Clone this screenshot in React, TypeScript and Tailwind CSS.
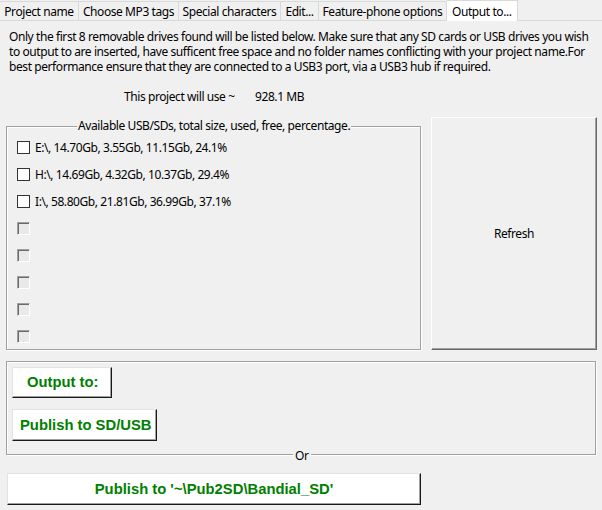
import React from "react";

const tabs = [
  { label: "Project name", w: "w-[79px]" },
  { label: "Choose MP3 tags", w: "w-[100px]" },
  { label: "Special characters", w: "w-[102px]" },
  { label: "Edit...", w: "w-[38px]" },
  { label: "Feature-phone options", w: "w-[128px]" },
];

const drives = [
  "E:\\, 14.70Gb, 3.55Gb, 11.15Gb, 24.1%",
  "H:\\, 14.69Gb, 4.32Gb, 10.37Gb, 29.4%",
  "I:\\, 58.80Gb, 21.81Gb, 36.99Gb, 37.1%",
];

function GreenButton({ children, className }: { children: React.ReactNode; className: string }) {
  return (
    <div
      className={
        "flex items-center whitespace-nowrap bg-white border border-t-[#e3e3e3] border-l-[#e3e3e3] border-r-[#1a1a1a] border-b-[#1a1a1a] shadow-[inset_-1px_-1px_0_#a0a0a0] font-['Liberation_Sans',Arial,sans-serif] font-bold text-[14.8px] tracking-normal text-[#008000] " +
        className
      }
    >
      {children}
    </div>
  );
}

export default function App() {
  return (
    <div className="w-[602px] h-[510px] bg-[#f0f0f0] overflow-hidden text-[12px] tracking-[-0.42px] text-black font-['Noto_Sans',sans-serif]">
      {/* Tabs */}
      <div className="flex h-[21px] items-end border-b border-[#d9d9d9]">
        {tabs.map((t) => (
          <div
            key={t.label}
            className={
              t.w +
              " h-[19px] border-t border-r border-[#d9d9d9] bg-[#f0f0f0] flex items-center justify-center whitespace-nowrap leading-[15px]"
            }
          >
            {t.label}
          </div>
        ))}
        <div className="w-[71px] h-[21px] -mb-px bg-white border-t border-r border-[#d9d9d9] flex items-center pl-[5px] whitespace-nowrap leading-[15px]">
          Output to...
        </div>
      </div>

      {/* Description */}
      <div className="pl-[9px] pt-[8px] leading-[15px] whitespace-nowrap">
        <div>Only the first 8 removable drives found will be listed below. Make sure that any SD cards or USB drives you wish</div>
        <div>to output to are inserted, have sufficent free space and no folder names conflicting with your project name.For</div>
        <div>best performance ensure that they are connected to a USB3 port, via a USB3 hub if required.</div>
      </div>

      <div className="mt-[15px] flex h-[15px] leading-[15px] whitespace-nowrap">
        <span className="pl-[124px] w-[255px]">This project will use ~</span>
        <span>928.1 MB</span>
      </div>

      {/* Drives + Refresh */}
      <div className="mt-[13px] flex h-[233px] pl-[6px]">
        <div className="relative mt-[9px] w-[415px] h-[224px] border border-[#a0a0a0] shadow-[inset_1px_1px_0_#fff,1px_1px_0_#fff]">
          <span className="absolute left-[70px] top-[-9px] px-[1px] bg-[#f0f0f0] leading-[15px] whitespace-nowrap">
            Available USB/SDs, total size, used, free, percentage.
          </span>
          <div className="flex flex-col pt-[7px] pl-[10px]">
            {Array.from({ length: 8 }).map((_, i) => (
              <div key={i} className="flex items-center h-[27px]">
                {i < drives.length ? (
                  <div className="w-[13px] h-[13px] border border-[#333] bg-white" />
                ) : (
                  <div className="w-[13px] h-[13px] border border-t-[#a0a0a0] border-l-[#a0a0a0] border-r-white border-b-white shadow-[inset_1px_1px_0_#696969] bg-[#e9e9e9]" />
                )}
                {i < drives.length && (
                  <span className="ml-[5px] whitespace-nowrap leading-[15px]">{drives[i]}</span>
                )}
              </div>
            ))}
          </div>
        </div>
        <div className="ml-[10px] w-[166px] h-[233px] flex items-center justify-center border border-t-white border-l-white border-r-[#696969] border-b-[#696969] shadow-[inset_-1px_-1px_0_#a0a0a0] bg-[#f0f0f0]">
          Refresh
        </div>
      </div>

      {/* Output group */}
      <div className="relative mt-[11px] ml-[6px] w-[590px] h-[94px] border border-[#a0a0a0] shadow-[inset_1px_1px_0_#fff,1px_1px_0_#fff] pl-[5px] pt-[5px] flex flex-col items-start">
        <GreenButton className="w-[100px] h-[31px] pl-[14px]">Output to:</GreenButton>
        <GreenButton className="mt-[11px] w-[145px] h-[32px] pl-[7px]">Publish to SD/USB</GreenButton>
        <span className="absolute left-[286px] bottom-[-9px] px-[2px] bg-[#f0f0f0] leading-[15px]">Or</span>
      </div>

      <GreenButton className="mt-[18px] ml-[7px] w-[414px] h-[32px] justify-center">
        Publish to '~\Pub2SD\Bandial_SD'
      </GreenButton>
    </div>
  );
}
